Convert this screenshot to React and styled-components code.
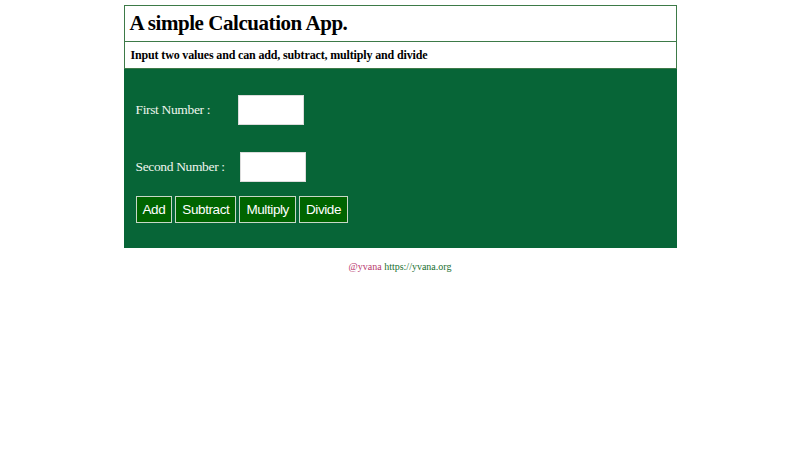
import styled, { createGlobalStyle } from "styled-components"

const GlobalStyle = createGlobalStyle`
  body {
    margin: 0;
    background: #ffffff;
    font-family: "Liberation Serif", "Times New Roman", serif;
  }
`

export default function App() {
  return (
    <>
      <GlobalStyle />
      <Wrapper>
        <TitleBox>
          <Title>A simple Calcuation App.</Title>
        </TitleBox>
        <SubtitleBox>Input two values and can add, subtract, multiply and divide</SubtitleBox>
        <Panel>
          <Row $space={27}>
            <Label $width={102}>First Number :</Label>
            <NumberInput type="text" />
          </Row>
          <Row $space={14}>
            <Label $width={104}>Second Number :</Label>
            <NumberInput type="text" />
          </Row>
          <Buttons>
            <OpButton>Add</OpButton>
            <OpButton>Subtract</OpButton>
            <OpButton>Multiply</OpButton>
            <OpButton>Divide</OpButton>
          </Buttons>
        </Panel>
        <Footer>
          <Handle>@yvana</Handle> <Site>https://yvana.org</Site>
        </Footer>
      </Wrapper>
    </>
  )
}

const Wrapper = styled.div`
  width: 553px;
  margin: 5px auto 0;
`

const TitleBox = styled.div`
  height: 35px;
  border: 1px solid #3d7a48;
  display: flex;
  align-items: center;
  padding: 0 5px;
`

const Title = styled.h1`
  margin: 0;
  font-size: 21px;
  letter-spacing: -0.45px;
  font-weight: bold;
  color: #000;
`

const SubtitleBox = styled.div`
  height: 26px;
  border: 1px solid #3d7a48;
  border-top: none;
  display: flex;
  align-items: center;
  padding: 0 6px;
  font-size: 12px;
  letter-spacing: -0.15px;
  font-weight: bold;
  color: #000;
`

const Panel = styled.div`
  background: #076537;
  padding: 26px 12px 25px;
`

const Row = styled.div`
  display: flex;
  align-items: center;
  height: 30px;
  margin-bottom: ${props => props.$space}px;
`

const Label = styled.span`
  flex-shrink: 0;
  width: ${props => props.$width}px;
  color: #eef5ee;
  font-size: 13.5px;
  letter-spacing: -0.35px;
`

const NumberInput = styled.input`
  box-sizing: border-box;
  width: 66px;
  height: 30px;
  border: 1px solid #dcdcdc;
  background: #ffffff;
  padding: 0 4px;
  outline: none;
`

const Buttons = styled.div`
  display: flex;
  gap: 3px;
`

const OpButton = styled.button`
  height: 27px;
  padding: 0 6px;
  background: #006400;
  border: 1px solid #c8d8c8;
  color: #ffffff;
  font-family: "Liberation Sans", Arial, sans-serif;
  font-size: 13.5px;
  letter-spacing: -0.4px;
`

const Footer = styled.div`
  text-align: center;
  margin-top: 13px;
  font-size: 10px;
`

const Handle = styled.span`
  color: #b8386e;
`

const Site = styled.span`
  color: #22702f;
`
